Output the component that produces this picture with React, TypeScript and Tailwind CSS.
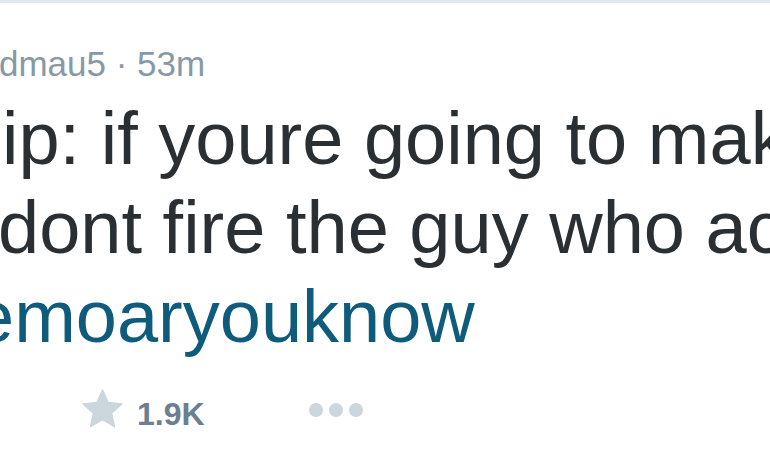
const FONT = "font-['Liberation_Sans',Arial,sans-serif]";

function StarIcon() {
  return (
    <svg viewBox="0 0 24 22" className="w-[43px] h-[39px]" fill="#ccd6dd">
      <path d="M12 0.6 L15.2 7.6 L23 8.4 L17.1 13.6 L18.8 21.3 L12 17.3 L5.2 21.3 L6.9 13.6 L1 8.4 L8.8 7.6 Z" strokeLinejoin="round" stroke="#ccd6dd" strokeWidth="0.8" />
    </svg>
  );
}

export default function App() {
  return (
    <div className={`w-[770px] h-[470px] bg-white overflow-hidden ${FONT}`}>
      <div className="h-[3px] bg-[#e1e8ed]" />

      <div className="mt-[41px] ml-[-1px] h-[40px] leading-[40px] text-[35px] text-[#8899a6] whitespace-nowrap">
        dmau5 · 53m
      </div>

      <div className="mt-[10px] text-[74px] leading-[89px] text-[#292f33] whitespace-nowrap">
        <div className="ml-[2px]">ip: if youre going to make</div>
        <div className="ml-[-2px]">dont fire the guy who actually</div>
        <div className="ml-[-27px] text-[#0e5b7b]">emoaryouknow</div>
      </div>

      <div className="mt-[28px] ml-[81px] flex items-start">
        <StarIcon />
        <span className="ml-[13px] mt-[7px] text-[32px] leading-[36px] font-bold text-[#6d7e90]">1.9K</span>
        <div className="ml-[104px] mt-[14px] flex gap-[6px]">
          <span className="w-[14px] h-[14px] rounded-full bg-[#ccd6dd]" />
          <span className="w-[14px] h-[14px] rounded-full bg-[#ccd6dd]" />
          <span className="w-[14px] h-[14px] rounded-full bg-[#ccd6dd]" />
        </div>
      </div>
    </div>
  );
}
